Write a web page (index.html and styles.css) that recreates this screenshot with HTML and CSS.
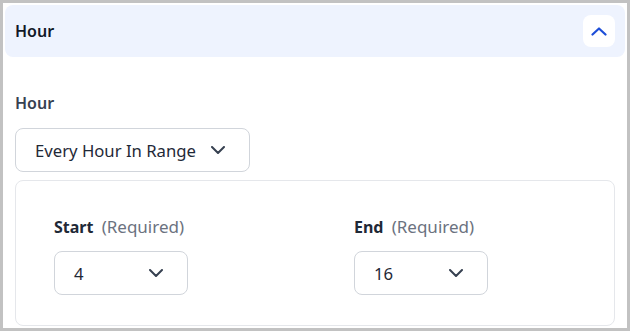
FILE: index.html
```html
<!doctype html>
<html lang="en">
  <head>
    <meta charset="UTF-8" />
    <meta name="viewport" content="width=device-width, initial-scale=1.0" />
    <title>Hour</title>
    <link rel="stylesheet" href="styles.css">
  </head>
  <body>
    <div class="card">
      <div class="card-header">
        <h2>Hour</h2>
        <button class="toggle" aria-label="Collapse">
          <svg width="16" height="9" viewBox="0 0 16 9" fill="none">
            <path d="M1.5 7.5 L8 1.5 L14.5 7.5" stroke="#1d4ed8" stroke-width="2.2" stroke-linecap="round" stroke-linejoin="round"/>
          </svg>
        </button>
      </div>

      <div class="card-body">
        <label class="field-label">Hour</label>
        <div class="select wide">
          <span>Every Hour In Range</span>
          <svg width="14" height="8" viewBox="0 0 14 8" fill="none">
            <path d="M1 1 L7 7 L13 1" stroke="#374151" stroke-width="2" stroke-linecap="round" stroke-linejoin="round"/>
          </svg>
        </div>

        <div class="range">
          <div class="range-field">
            <div class="range-label"><b>Start</b> <span>(Required)</span></div>
            <div class="select small">
              <span>4</span>
              <svg width="14" height="8" viewBox="0 0 14 8" fill="none">
                <path d="M1 1 L7 7 L13 1" stroke="#374151" stroke-width="2" stroke-linecap="round" stroke-linejoin="round"/>
              </svg>
            </div>
          </div>
          <div class="range-field">
            <div class="range-label"><b>End</b> <span>(Required)</span></div>
            <div class="select small">
              <span>16</span>
              <svg width="14" height="8" viewBox="0 0 14 8" fill="none">
                <path d="M1 1 L7 7 L13 1" stroke="#374151" stroke-width="2" stroke-linecap="round" stroke-linejoin="round"/>
              </svg>
            </div>
          </div>
        </div>
      </div>
    </div>
  </body>
</html>
```

FILE: styles.css
```css
* {
  box-sizing: border-box;
}
body {
  margin: 0;
  font-family: "Noto Sans", "Open Sans", sans-serif;
  color: #1f2937;
  background: white;
}
.card {
  width: 630px;
  height: 331px;
  border: 3px solid #c2c2c2;
  padding: 2px;
  background: white;
}
.card-header {
  display: flex;
  align-items: center;
  justify-content: space-between;
  height: 52px;
  padding: 0 10px;
  background-color: #eef3fe;
  border-radius: 8px;
}
.card-header h2 {
  margin: 0;
  font-size: 16px;
  font-weight: 600;
  color: #111827;
}
.toggle {
  display: flex;
  align-items: center;
  justify-content: center;
  width: 32px;
  height: 32px;
  padding: 0;
  border: none;
  border-radius: 8px;
  background: white;
  cursor: pointer;
}
.card-body {
  padding: 34px 10px 0;
}
.field-label {
  display: block;
  font-size: 16px;
  line-height: 24px;
  font-weight: 600;
  color: #374151;
  margin-bottom: 13px;
}
.select {
  display: flex;
  align-items: center;
  justify-content: space-between;
  height: 44px;
  padding: 0 24px 0 19px;
  border: 1px solid #d1d5db;
  border-radius: 8px;
  background: white;
  font-size: 16.7px;
  color: #1f2937;
}
.select.wide {
  width: 235px;
}
.select.small {
  width: 134px;
}
.range {
  display: flex;
  margin-top: 8px;
  padding: 34px 38px 30px;
  border: 1px solid #e5e7eb;
  border-radius: 8px;
}
.range-field {
  flex: none;
  width: 300px;
}
.range-label {
  font-size: 16px;
  line-height: 24px;
  margin-bottom: 12px;
}
.range-label b {
  font-weight: 700;
  color: #1f2937;
  margin-right: 4px;
}
.range-label span {
  font-size: 17px;
  color: #6b7280;
}
```
